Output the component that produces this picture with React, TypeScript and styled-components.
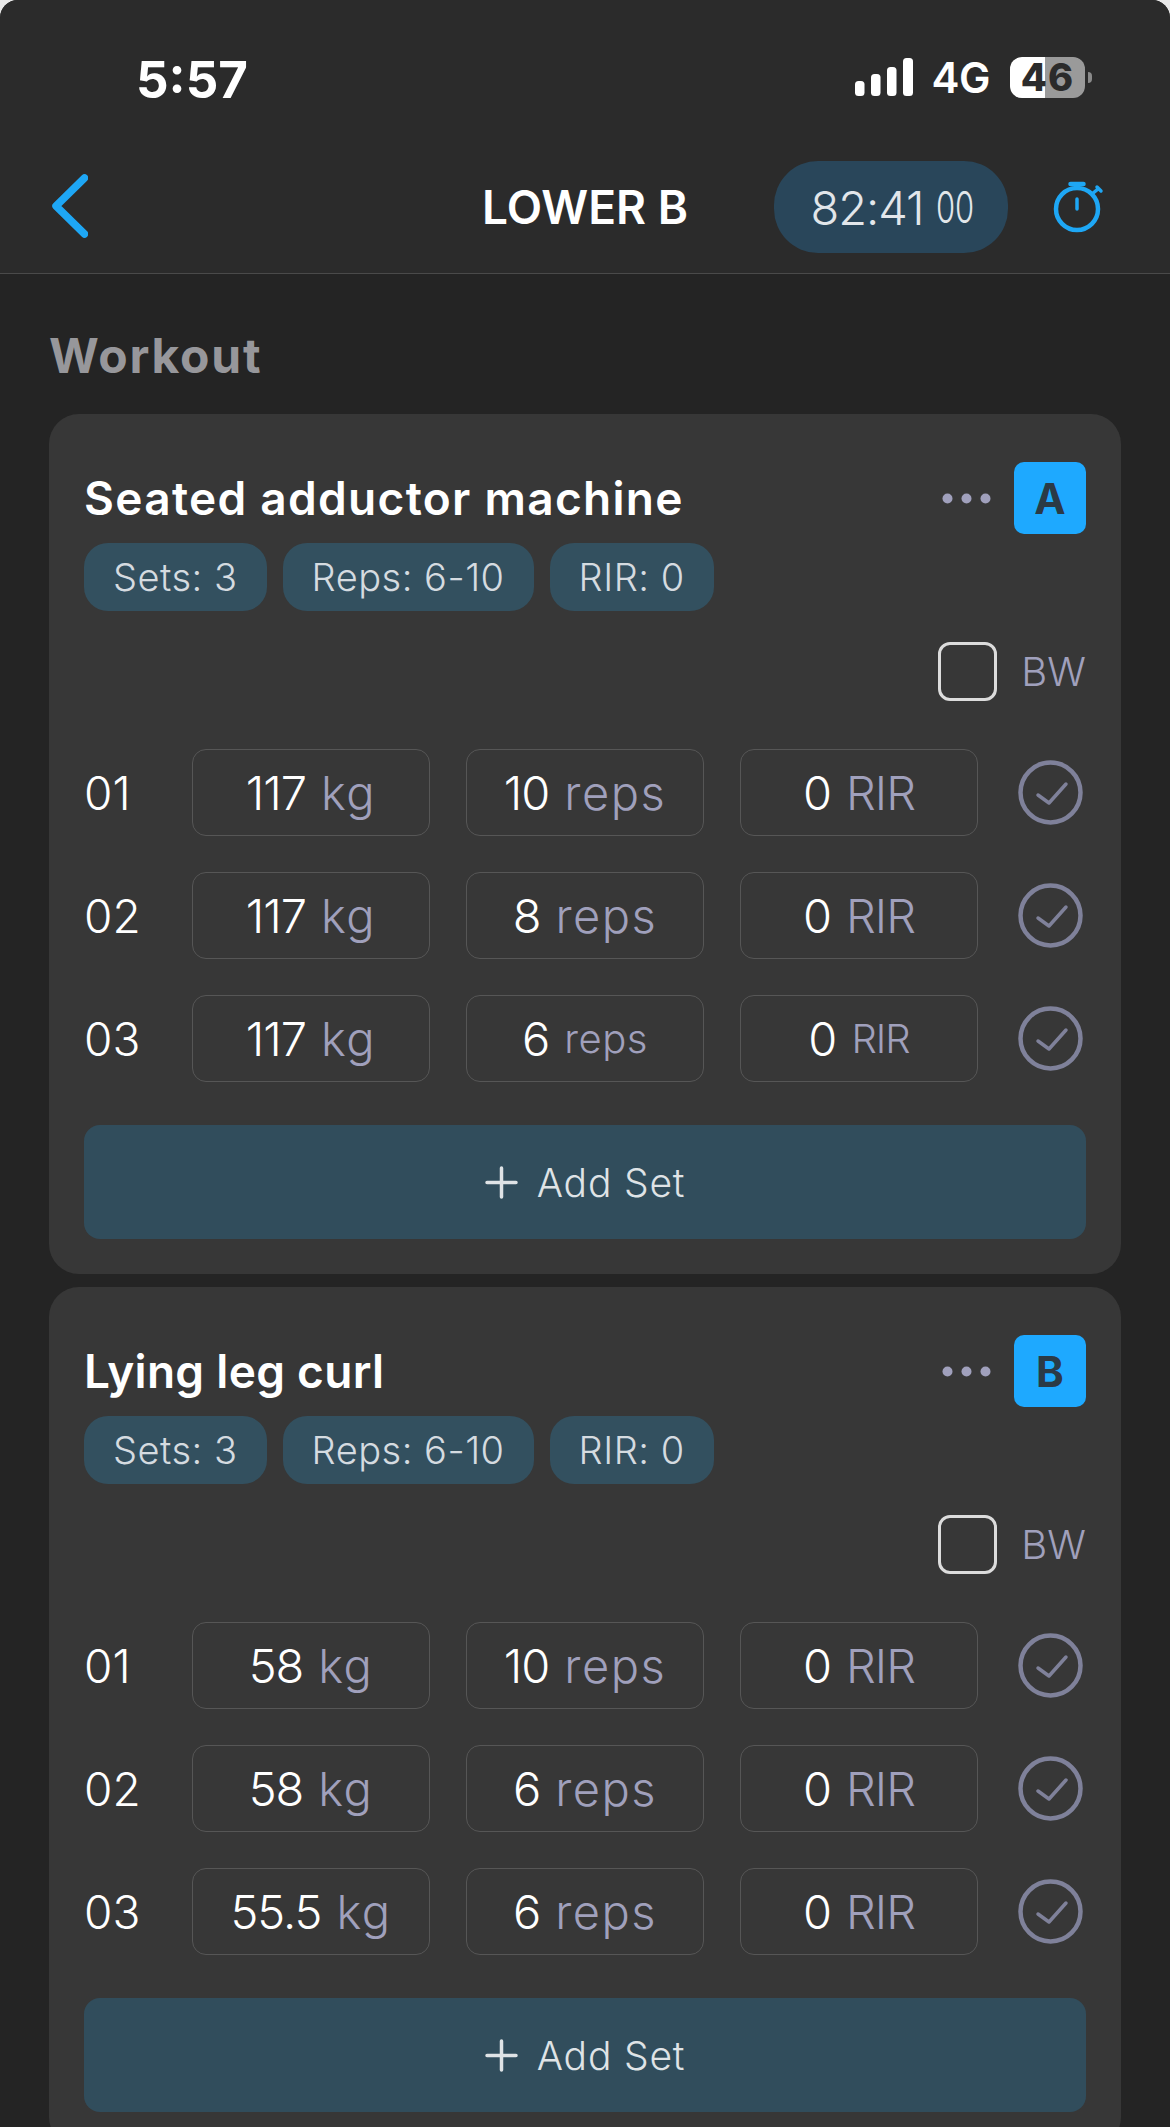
import styled, { createGlobalStyle } from "styled-components";

interface SetRow {
  weight: string;
  reps: string;
  rir: string;
  small?: boolean;
}

interface Exercise {
  name: string;
  letter: string;
  tracking: number;
  sets: SetRow[];
}

const exercises: Exercise[] = [
  {
    name: "Seated adductor machine",
    letter: "A",
    tracking: 1.3,
    sets: [
      { weight: "117", reps: "10", rir: "0" },
      { weight: "117", reps: "8", rir: "0" },
      { weight: "117", reps: "6", rir: "0", small: true },
    ],
  },
  {
    name: "Lying leg curl",
    letter: "B",
    tracking: 0.3,
    sets: [
      { weight: "58", reps: "10", rir: "0" },
      { weight: "58", reps: "6", rir: "0" },
      { weight: "55.5", reps: "6", rir: "0" },
    ],
  },
];

const GlobalStyle = createGlobalStyle`
  html, body {
    margin: 0;
    padding: 0;
    background: #e8e8e8;
  }
  body {
    font-family: Inter, "Noto Sans", sans-serif;
  }
`;

const Screen = styled.div`
  width: 1170px;
  height: 2127px;
  overflow: hidden;
  border-radius: 18px 18px 0 0;
  background: #242424;
  color: #fff;
`;

const Header = styled.header`
  background: #2b2b2b;
  border-bottom: 1px solid #4a4a4a;
  height: 274px;
  box-sizing: border-box;
`;

const StatusBar = styled.div`
  height: 161px;
  padding: 55px 85px 0 136px;
  box-sizing: border-box;
  display: flex;
  justify-content: space-between;
  align-items: flex-start;
`;

const Clock = styled.div`
  font-size: 51px;
  line-height: 50px;
  font-weight: 700;
`;

const StatusIcons = styled.div`
  display: flex;
  align-items: center;
  height: 44px;
`;

const Network = styled.span`
  font-size: 42px;
  font-weight: 600;
  margin: 0 20px 0 19px;
  letter-spacing: -0.5px;
`;

const Battery = styled.div`
  position: relative;
  width: 75px;
  height: 41px;
  border-radius: 12px;
  background: linear-gradient(90deg, #fff 0 47%, #9a9a9a 47% 100%);
  color: #2b2b2b;
  font-size: 38px;
  line-height: 41px;
  font-weight: 800;
  text-align: center;
  letter-spacing: 1px;

  &::after {
    content: "";
    position: absolute;
    right: -7px;
    top: 15px;
    width: 4px;
    height: 11px;
    border-radius: 0 4px 4px 0;
    background: #8a8a8a;
  }
`;

const Nav = styled.div`
  display: grid;
  grid-template-columns: 1fr auto 1fr;
  align-items: center;
  height: 92px;
  padding: 0 52px;
`;

const BackSlot = styled.div`
  display: flex;
  margin-top: -3px;
`;

const NavTitle = styled.h1`
  margin: 0;
  font-size: 46px;
  font-weight: 600;
`;

const NavRight = styled.div`
  display: flex;
  justify-content: flex-end;
  align-items: center;
  gap: 46px;
  padding-right: 18px;
`;

const TimerPill = styled.div`
  width: 234px;
  height: 92px;
  border-radius: 44px;
  background: #29465a;
  color: #e2e6ea;
  display: flex;
  align-items: center;
  justify-content: center;
  font-size: 47px;
  font-weight: 300;
  letter-spacing: -1px;
`;

const TimerCents = styled.span`
  display: inline-block;
  font-size: 43px;
  margin-left: 12px;
  letter-spacing: 0;
  width: 36px;
  transform: scaleX(0.72);
  transform-origin: left center;
`;

const Content = styled.main`
  padding: 0 49px;
`;

const SectionTitle = styled.h2`
  margin: 0;
  height: 140px;
  padding-top: 56px;
  box-sizing: border-box;
  font-size: 48px;
  line-height: 52px;
  font-weight: 700;
  color: #97979b;
  letter-spacing: 1.8px;
`;

const Card = styled.section`
  background: #373737;
  border-radius: 30px;
  padding: 48px 35px 35px;
  margin-bottom: 13px;
`;

const CardTop = styled.div`
  display: flex;
  align-items: center;
  justify-content: space-between;
  height: 72px;
`;

const ExerciseName = styled.h3<{ $tracking: number }>`
  margin: 0;
  font-size: 46px;
  font-weight: 600;
  letter-spacing: ${(p) => p.$tracking}px;
`;

const CardActions = styled.div`
  display: flex;
  align-items: center;
  gap: 23px;
`;

const GroupBadge = styled.div`
  width: 72px;
  height: 72px;
  border-radius: 10px;
  background: #1ea9ff;
  color: #2b3a46;
  display: flex;
  align-items: center;
  justify-content: center;
  font-size: 42px;
  font-weight: 700;
`;

const Chips = styled.div`
  display: flex;
  gap: 16px;
  margin-top: 9px;
`;

const Chip = styled.div`
  height: 68px;
  padding: 0 29px;
  border-radius: 24px;
  background: #33505f;
  color: #d5dbe0;
  display: flex;
  align-items: center;
  font-size: 38px;
  font-weight: 300;
  letter-spacing: 0.5px;
`;

const BodyweightRow = styled.div`
  display: flex;
  justify-content: flex-end;
  align-items: center;
  gap: 24px;
  margin-top: 31px;
  margin-bottom: 48px;
`;

const Checkbox = styled.div`
  width: 59px;
  height: 59px;
  box-sizing: border-box;
  border: 3px solid #dcdcdc;
  border-radius: 12px;
`;

const BwLabel = styled.span`
  font-size: 40px;
  font-weight: 300;
  color: #a0a0bc;
`;

const Rows = styled.div`
  display: grid;
  grid-template-columns: 72px repeat(3, 238px) 72px;
  gap: 36px;
  align-items: center;
`;

const RowNumber = styled.div`
  font-size: 46px;
  font-weight: 300;
`;

const ValueBox = styled.div`
  height: 87px;
  box-sizing: border-box;
  border: 1.5px solid #565656;
  border-radius: 14px;
  display: flex;
  align-items: center;
  justify-content: center;
  gap: 15px;
  font-size: 47px;
  font-weight: 300;
  letter-spacing: -1px;
`;

const Unit = styled.span<{ $small?: boolean; $tight?: boolean }>`
  color: #a0a0bc;
  font-size: ${(p) => (p.$small ? "40px" : "47px")};
  letter-spacing: ${(p) => (p.$tight ? "-1px" : p.$small ? "0.5px" : "1.5px")};
`;

const CheckWrap = styled.div`
  display: flex;
  justify-content: center;
`;

const AddButton = styled.button`
  width: 100%;
  height: 114px;
  margin-top: 43px;
  border: 0;
  border-radius: 16px;
  background: #314d5c;
  color: #dfe3e6;
  display: flex;
  align-items: center;
  justify-content: center;
  gap: 19px;
  font-family: inherit;
  font-size: 39px;
  font-weight: 300;
  letter-spacing: 0.8px;
`;

function BackIcon() {
  return (
    <svg width="36" height="64" viewBox="0 0 36 64" fill="none">
      <path d="M32.5 4 4 32l28.5 28" stroke="#1ea7f5" strokeWidth="7.5" strokeLinecap="round" strokeLinejoin="round" />
    </svg>
  );
}

function StopwatchIcon() {
  return (
    <svg width="46" height="50" viewBox="0 0 46 50" fill="none" stroke="#1ea7f5" strokeLinecap="round" style={{ overflow: "visible" }}>
      <circle cx="23" cy="27" r="21" strokeWidth="4.5" />
      <path d="M16.5 2h13" strokeWidth="4.5" />
      <path d="M23 17v10" strokeWidth="3.5" />
      <path d="M38 12l6-5M43 5l4 4" strokeWidth="3.5" />
    </svg>
  );
}

function SignalIcon() {
  return (
    <svg width="58" height="38" viewBox="0 0 58 38" fill="#fff">
      <rect x="0" y="23" width="9.5" height="15" rx="3.5" />
      <rect x="16" y="16" width="9.5" height="22" rx="3.5" />
      <rect x="32" y="9" width="9.5" height="29" rx="3.5" />
      <rect x="48" y="0" width="10" height="38" rx="3.5" />
    </svg>
  );
}

function DotsIcon() {
  return (
    <svg width="49" height="11" viewBox="0 0 49 11" fill="#a0a0bc">
      <circle cx="5.5" cy="5.5" r="5" />
      <circle cx="24.5" cy="5.5" r="5" />
      <circle cx="43.5" cy="5.5" r="5" />
    </svg>
  );
}

function CheckCircleIcon() {
  return (
    <svg width="65" height="65" viewBox="0 0 65 65" fill="none" stroke="#7f819a">
      <circle cx="32.5" cy="32.5" r="30" strokeWidth="4.5" />
      <path d="M20 35l11 8 17-19" strokeWidth="3.5" strokeLinecap="round" strokeLinejoin="round" />
    </svg>
  );
}

function PlusIcon() {
  return (
    <svg width="33" height="33" viewBox="0 0 33 33" fill="none" stroke="#dfe3e6" strokeWidth="3.5" strokeLinecap="round">
      <path d="M16.5 2v29M2 16.5h29" />
    </svg>
  );
}

function ExerciseCard({ exercise }: { exercise: Exercise }) {
  return (
    <Card>
      <CardTop>
        <ExerciseName $tracking={exercise.tracking}>{exercise.name}</ExerciseName>
        <CardActions>
          <DotsIcon />
          <GroupBadge>{exercise.letter}</GroupBadge>
        </CardActions>
      </CardTop>
      <Chips>
        <Chip>Sets: 3</Chip>
        <Chip>Reps: 6-10</Chip>
        <Chip>RIR: 0</Chip>
      </Chips>
      <BodyweightRow>
        <Checkbox />
        <BwLabel>BW</BwLabel>
      </BodyweightRow>
      <Rows>
        {exercise.sets.map((set, i) => (
          <div key={i} style={{ display: "contents" }}>
            <RowNumber>0{i + 1}</RowNumber>
            <ValueBox>
              {set.weight} <Unit>kg</Unit>
            </ValueBox>
            <ValueBox>
              {set.reps} <Unit $small={set.small}>reps</Unit>
            </ValueBox>
            <ValueBox>
              {set.rir} <Unit $small={set.small} $tight>RIR</Unit>
            </ValueBox>
            <CheckWrap>
              <CheckCircleIcon />
            </CheckWrap>
          </div>
        ))}
      </Rows>
      <AddButton>
        <PlusIcon />
        Add Set
      </AddButton>
    </Card>
  );
}

export default function App() {
  return (
    <Screen>
      <GlobalStyle />
      <Header>
        <StatusBar>
          <Clock>5:57</Clock>
          <StatusIcons>
            <SignalIcon />
            <Network>4G</Network>
            <Battery>46</Battery>
          </StatusIcons>
        </StatusBar>
        <Nav>
          <BackSlot>
            <BackIcon />
          </BackSlot>
          <NavTitle>LOWER B</NavTitle>
          <NavRight>
            <TimerPill>
              82:41
              <TimerCents>00</TimerCents>
            </TimerPill>
            <StopwatchIcon />
          </NavRight>
        </Nav>
      </Header>
      <Content>
        <SectionTitle>Workout</SectionTitle>
        {exercises.map((exercise) => (
          <ExerciseCard key={exercise.letter} exercise={exercise} />
        ))}
      </Content>
    </Screen>
  );
}
